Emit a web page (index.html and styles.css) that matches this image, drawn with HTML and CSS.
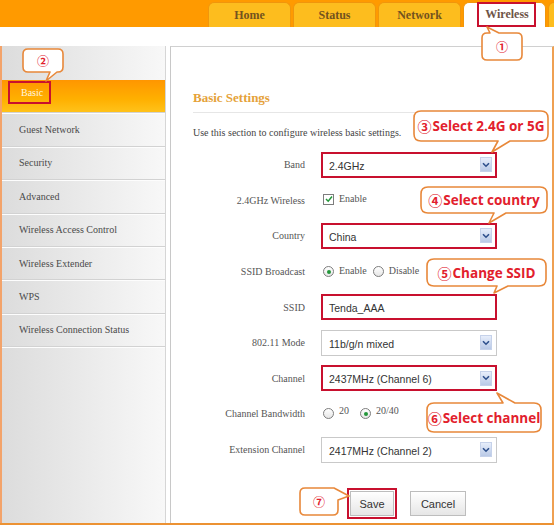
FILE: index.html
```html
<!DOCTYPE html>
<html>
<head>
<meta charset="utf-8">
<title>Wireless Basic Settings</title>
<link rel="stylesheet" href="styles.css">
</head>
<body>
<div class="page">
  <header class="topbar">
    <div class="tab">Home</div>
    <div class="tab">Status</div>
    <div class="tab">Network</div>
    <div class="tab active"><span class="tab-hl">Wireless</span></div>
    <div class="tab stub"></div>
  </header>
  <div class="strip"></div>
  <div class="body">
    <aside class="sidebar">
      <ul class="menu">
        <li class="active"><span class="menu-hl">Basic</span></li>
        <li>Guest Network</li>
        <li>Security</li>
        <li>Advanced</li>
        <li>Wireless Access Control</li>
        <li>Wireless Extender</li>
        <li>WPS</li>
        <li>Wireless Connection Status</li>
      </ul>
    </aside>
    <main class="panel">
      <h2 class="title">Basic Settings</h2>
      <p class="intro">Use this section to configure wireless basic settings.</p>
      <div class="form">
        <div class="row">
          <span class="label">Band</span>
          <div class="select hl"><span>2.4GHz</span><span class="arrow"><svg width="8" height="6" viewBox="0 0 8 6"><path d="M1 1.2 L4 4.2 L7 1.2" fill="none" stroke="#2d4f8c" stroke-width="1.6"/></svg></span></div>
        </div>
        <div class="row">
          <span class="label">2.4GHz Wireless</span>
          <span class="check"><svg width="8" height="8" viewBox="0 0 8 8"><path d="M1 4 L3.2 6.2 L7 1.5" fill="none" stroke="#23963a" stroke-width="1.5"/></svg></span>
          <span class="opt">Enable</span>
        </div>
        <div class="row">
          <span class="label">Country</span>
          <div class="select hl"><span>China</span><span class="arrow"><svg width="8" height="6" viewBox="0 0 8 6"><path d="M1 1.2 L4 4.2 L7 1.2" fill="none" stroke="#2d4f8c" stroke-width="1.6"/></svg></span></div>
        </div>
        <div class="row">
          <span class="label">SSID Broadcast</span>
          <span class="radio on"></span><span class="opt">Enable</span>
          <span class="radio"></span><span class="opt">Disable</span>
        </div>
        <div class="row">
          <span class="label">SSID</span>
          <div class="select hl"><span>Tenda_AAA</span></div>
        </div>
        <div class="row">
          <span class="label">802.11 Mode</span>
          <div class="select"><span>11b/g/n mixed</span><span class="arrow"><svg width="8" height="6" viewBox="0 0 8 6"><path d="M1 1.2 L4 4.2 L7 1.2" fill="none" stroke="#2d4f8c" stroke-width="1.6"/></svg></span></div>
        </div>
        <div class="row">
          <span class="label">Channel</span>
          <div class="select hl"><span>2437MHz (Channel 6)</span><span class="arrow"><svg width="8" height="6" viewBox="0 0 8 6"><path d="M1 1.2 L4 4.2 L7 1.2" fill="none" stroke="#2d4f8c" stroke-width="1.6"/></svg></span></div>
        </div>
        <div class="row">
          <span class="label">Channel Bandwidth</span>
          <span class="radio"></span><span class="opt sup">20</span>
          <span class="radio on"></span><span class="opt sup">20/40</span>
        </div>
        <div class="row">
          <span class="label">Extension Channel</span>
          <div class="select"><span>2417MHz (Channel 2)</span><span class="arrow"><svg width="8" height="6" viewBox="0 0 8 6"><path d="M1 1.2 L4 4.2 L7 1.2" fill="none" stroke="#2d4f8c" stroke-width="1.6"/></svg></span></div>
        </div>
      </div>
      <div class="buttons">
        <button class="btn save">Save</button>
        <button class="btn cancel">Cancel</button>
      </div>
    </main>
  </div>

  <svg class="bubbles" width="554" height="525" viewBox="0 0 554 525">
    <g fill="#fff" stroke="#e8883a" stroke-width="1.6" stroke-linejoin="round">
      <path d="M487 33 H490 L487 27 L499 33 H517 Q522 33 522 38 V55 Q522 60 517 60 H487 Q482 60 482 55 V38 Q482 33 487 33 Z"/>
      <path d="M28 49 H58 Q63 49 63 54 V67 Q63 72 58 72 H57 L46 81 L50 72 H28 Q23 72 23 67 V54 Q23 49 28 49 Z"/>
      <path d="M421 111 H541 Q548 111 548 118 V134 Q548 141 541 141 H510 L492 152 L498 141 H421 Q414 141 414 134 V118 Q414 111 421 111 Z"/>
      <path d="M428 187 H540 Q547 187 547 194 V206 Q547 213 540 213 H506 L489 223 L494 213 H428 Q421 213 421 206 V194 Q421 187 428 187 Z"/>
      <path d="M434 259 H539 Q546 259 546 266 V279 Q546 286 539 286 H508 L494 293 L497 286 H434 Q427 286 427 279 V266 Q427 259 434 259 Z"/>
      <path d="M434 403 H503 L497 393 L515 403 H534 Q541 403 541 410 V425 Q541 432 534 432 H434 Q427 432 427 425 V410 Q427 403 434 403 Z"/>
      <path d="M305 488 H334 L349 496 L338 500 V510 Q338 515 333 515 H305 Q300 515 300 510 V493 Q300 488 305 488 Z"/>
    </g>
  </svg>
  <div class="ct c1">①</div>
  <div class="ct c2">②</div>
  <div class="ct c3"><span class="num">③</span>Select 2.4G or 5G</div>
  <div class="ct c4"><span class="num">④</span>Select country</div>
  <div class="ct c5"><span class="num">⑤</span>Change SSID</div>
  <div class="ct c6"><span class="num">⑥</span>Select channel</div>
  <div class="ct c7">⑦</div>
</div>
</body>
</html>
```
FILE: styles.css
```css
* { box-sizing: border-box; margin: 0; padding: 0; }
body { margin: 0; background: #fff; font-family: "Liberation Serif", serif; }

.page { position: relative; width: 554px; height: 525px; overflow: hidden; background: #fff; }

/* top tabs */
.topbar { height: 27px; background: #ff9a00; display: flex; align-items: flex-end; gap: 2px; padding-left: 208px; }
.tab { flex: none; width: 83px; height: 25px; background: #fdbd1e; border: 1px solid #f0960c; border-bottom: none; border-radius: 6px 6px 0 0; display: flex; align-items: center; justify-content: center; font: bold 12px "Liberation Serif", serif; color: #73531f; }
.tab.active { background: #fff; color: #6e5447; }
.tab.stub { width: 20px; }
.tab-hl { display: flex; align-items: center; height: 25px; padding: 0 5px 0 6px; margin-left: 4px; border: 2px solid #c8102e; margin-top: -1px; }

.strip { height: 19px; }

.body { display: flex; height: 479px; border-bottom: 2px solid #ec9233; }

/* sidebar */
.sidebar { flex: none; width: 166px; border-left: 2px solid #f3a36a; border-right: 1px solid #d6d6d6; background: linear-gradient(to right, #dcdcdc, #f8f8f8); padding-top: 34px; }
.menu { list-style: none; }
.menu li { height: 33.4px; display: flex; align-items: center; padding-left: 17px; font-size: 10px; color: #4a4a4a; border-bottom: 1px solid #d2d2d2; box-shadow: 0 1px 0 #fdfdfd; }
.menu li.active { background: linear-gradient(to bottom, #ff9600, #ffb000 60%, #ffc21a); color: #fff6dc; padding-left: 6px; }
.menu-hl { display: flex; align-items: center; height: 23px; padding: 0 6px 0 11px; border: 2px solid #c8102e; margin-top: -8px; }

/* main panel */
.panel { flex: 1; margin-left: 4px; border-left: 1px solid #c8c8c8; border-top: 1px solid #d0d0d0; border-right: 2px solid #efa052; padding: 43px 22px 0 22px; }
.title { font: bold 13px/16px "Liberation Serif", serif; color: #e5a23a; padding-bottom: 6px; border-bottom: 1px solid #e6e6e6; }
.intro { margin-top: 13px; font-size: 10px; line-height: 14px; color: #444; }

.form { margin-top: 7px; }
.row { display: flex; align-items: center; height: 35.6px; }
.label { flex: none; width: 112px; margin-right: 16px; text-align: right; font-size: 10px; color: #555; }

.select { flex: none; width: 176px; height: 26px; background: #fff; border: 1px solid #c9c9c9; display: flex; align-items: center; justify-content: space-between; padding: 2px 4px 0 7px; font: 10.5px "Liberation Sans", sans-serif; color: #333; }
.select.hl { border: 2px solid #c8102e; padding-left: 6px; padding-right: 3px; }
.arrow { width: 12px; height: 15px; margin-top: -2px; background: linear-gradient(to bottom, #e7eefb, #b9c9e6); border: 1px solid #c6d2ea; display: flex; align-items: center; justify-content: center; }

.check { width: 11px; height: 11px; border: 1px solid #7d7d7d; background: #fff; display: flex; align-items: center; justify-content: center; margin: 0 5px 2px 2px; }
.radio { width: 11px; height: 11px; border: 1px solid #7d7d7d; border-radius: 50%; background: linear-gradient(to bottom, #fff, #e6e6e6); margin: 0 5px 0 2px; display: flex; align-items: center; justify-content: center; }
.radio.on::after { content: ""; width: 4px; height: 4px; border-radius: 50%; background: #23963a; }
.opt { font-size: 10px; color: #555; margin-right: 4px; margin-top: -3px; }
.opt.sup { margin-right: 9px; margin-top: -6px; }

.buttons { display: flex; align-items: center; gap: 16px; margin-top: 24px; padding-left: 157px; }
.btn { height: 25px; border: 1px solid #bdbdbd; background: linear-gradient(to bottom, #ffffff, #e6e6e6); font: 11px "Liberation Sans", sans-serif; color: #333; }
.btn.save { width: 44px; outline: 2px solid #c8102e; outline-offset: 1px; }
.btn.cancel { width: 56px; }

/* callouts */
.bubbles { position: absolute; left: 0; top: 0; pointer-events: none; }
.ct { position: absolute; display: flex; align-items: center; justify-content: center; font: bold 13.5px "Open Sans", "Noto Sans CJK SC", sans-serif; color: #e2202c; white-space: nowrap; }
.ct .num { font-family: "Noto Sans CJK SC", "DejaVu Sans", sans-serif; font-size: 14px; margin-right: 1px; }
.c1, .c2, .c7 { font-family: "Noto Sans CJK SC", "DejaVu Sans", sans-serif; font-size: 12px; }
.c1 { left: 482px; top: 33px; width: 40px; height: 27px; }
.c2 { left: 23px; top: 49px; width: 40px; height: 23px; }
.c3 { left: 414px; top: 111px; width: 134px; height: 30px; }
.c4 { left: 421px; top: 187px; width: 126px; height: 26px; }
.c5 { left: 427px; top: 259px; width: 119px; height: 27px; }
.c6 { left: 427px; top: 403px; width: 114px; height: 29px; }
.c7 { left: 300px; top: 488px; width: 38px; height: 27px; }
```
